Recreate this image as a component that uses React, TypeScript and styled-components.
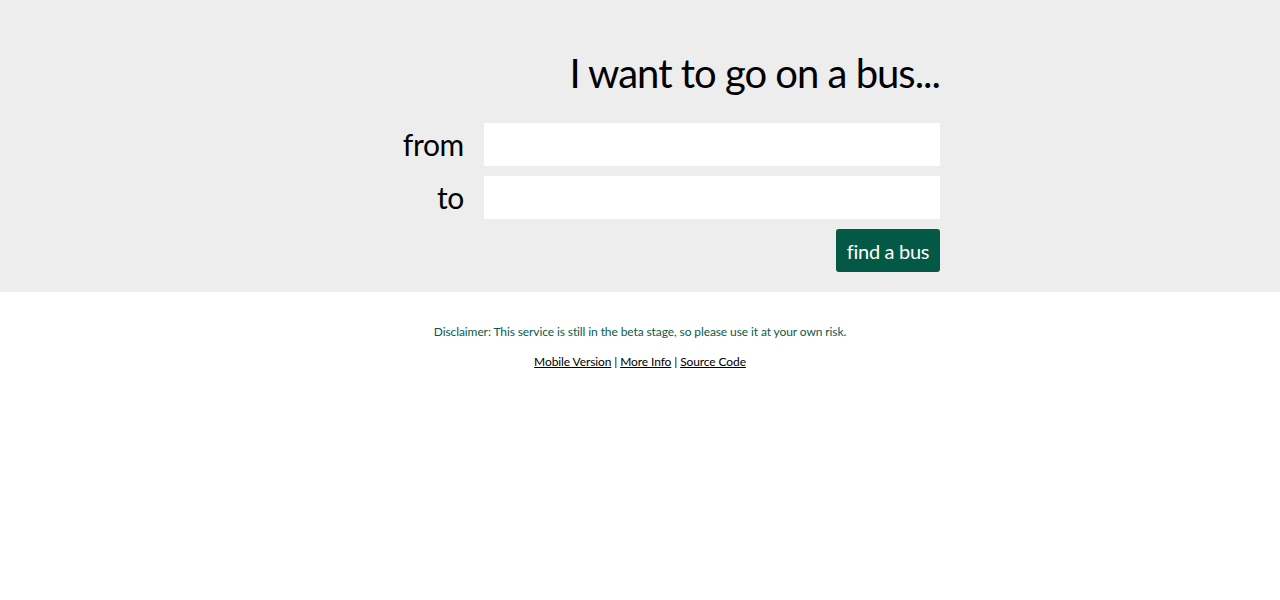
import React from 'react';
import styled, { createGlobalStyle } from 'styled-components';

const GlobalStyle = createGlobalStyle`
  html, body {
    margin: 0;
    padding: 0;
    background: #fff;
    font-family: Lato, "Open Sans", sans-serif;
  }
`;

const Band = styled.header`
  background: #ededed;
  padding: 47px 0 20px;
`;

const Container = styled.div`
  width: 600px;
  margin: 0 auto;
`;

const Title = styled.h1`
  margin: 0 0 24px;
  text-align: right;
  font-size: 40px;
  font-weight: 400;
  line-height: 52px;
  color: #000;
  letter-spacing: -1px;
`;

const Row = styled.div`
  display: grid;
  grid-template-columns: 124px 456px;
  column-gap: 20px;
  align-items: center;
  margin-bottom: 10px;
`;

const Label = styled.label`
  text-align: right;
  font-size: 30px;
  line-height: 43px;
  color: #000;
  letter-spacing: -0.3px;
`;

const Field = styled.input`
  height: 43px;
  border: none;
  background: #fff;
  padding: 0 10px;
  box-sizing: border-box;
  font-family: inherit;
  font-size: 20px;
  outline: none;
`;

const Actions = styled.div`
  display: flex;
  justify-content: flex-end;
`;

const Button = styled.button`
  height: 43px;
  width: 104px;
  border: none;
  border-radius: 3px;
  background: #035945;
  color: #fff;
  font-family: inherit;
  font-size: 20px;
  letter-spacing: -0.3px;
  padding: 0;
  cursor: pointer;
`;

const Footer = styled.footer`
  text-align: center;
  padding-top: 32px;
  font-size: 12px;
  letter-spacing: -0.1px;
`;

const Disclaimer = styled.p`
  margin: 0 0 14px;
  color: #0a5a48;
  line-height: 16px;
`;

const Links = styled.p`
  margin: 0;
  line-height: 16px;
  color: #000;
`;

const Link = styled.a`
  color: #000;
  text-decoration: underline;
`;

export default function App() {
  return (
    <>
      <GlobalStyle />
      <Band>
        <Container>
          <Title>I want to go on a bus...</Title>
          <Row>
            <Label>from</Label>
            <Field type="text" />
          </Row>
          <Row>
            <Label>to</Label>
            <Field type="text" />
          </Row>
          <Actions>
            <Button>find a bus</Button>
          </Actions>
        </Container>
      </Band>
      <Footer>
        <Disclaimer>Disclaimer: This service is still in the beta stage, so please use it at your own risk.</Disclaimer>
        <Links>
          <Link href="#">Mobile Version</Link> | <Link href="#">More Info</Link> | <Link href="#">Source Code</Link>
        </Links>
      </Footer>
    </>
  );
}
